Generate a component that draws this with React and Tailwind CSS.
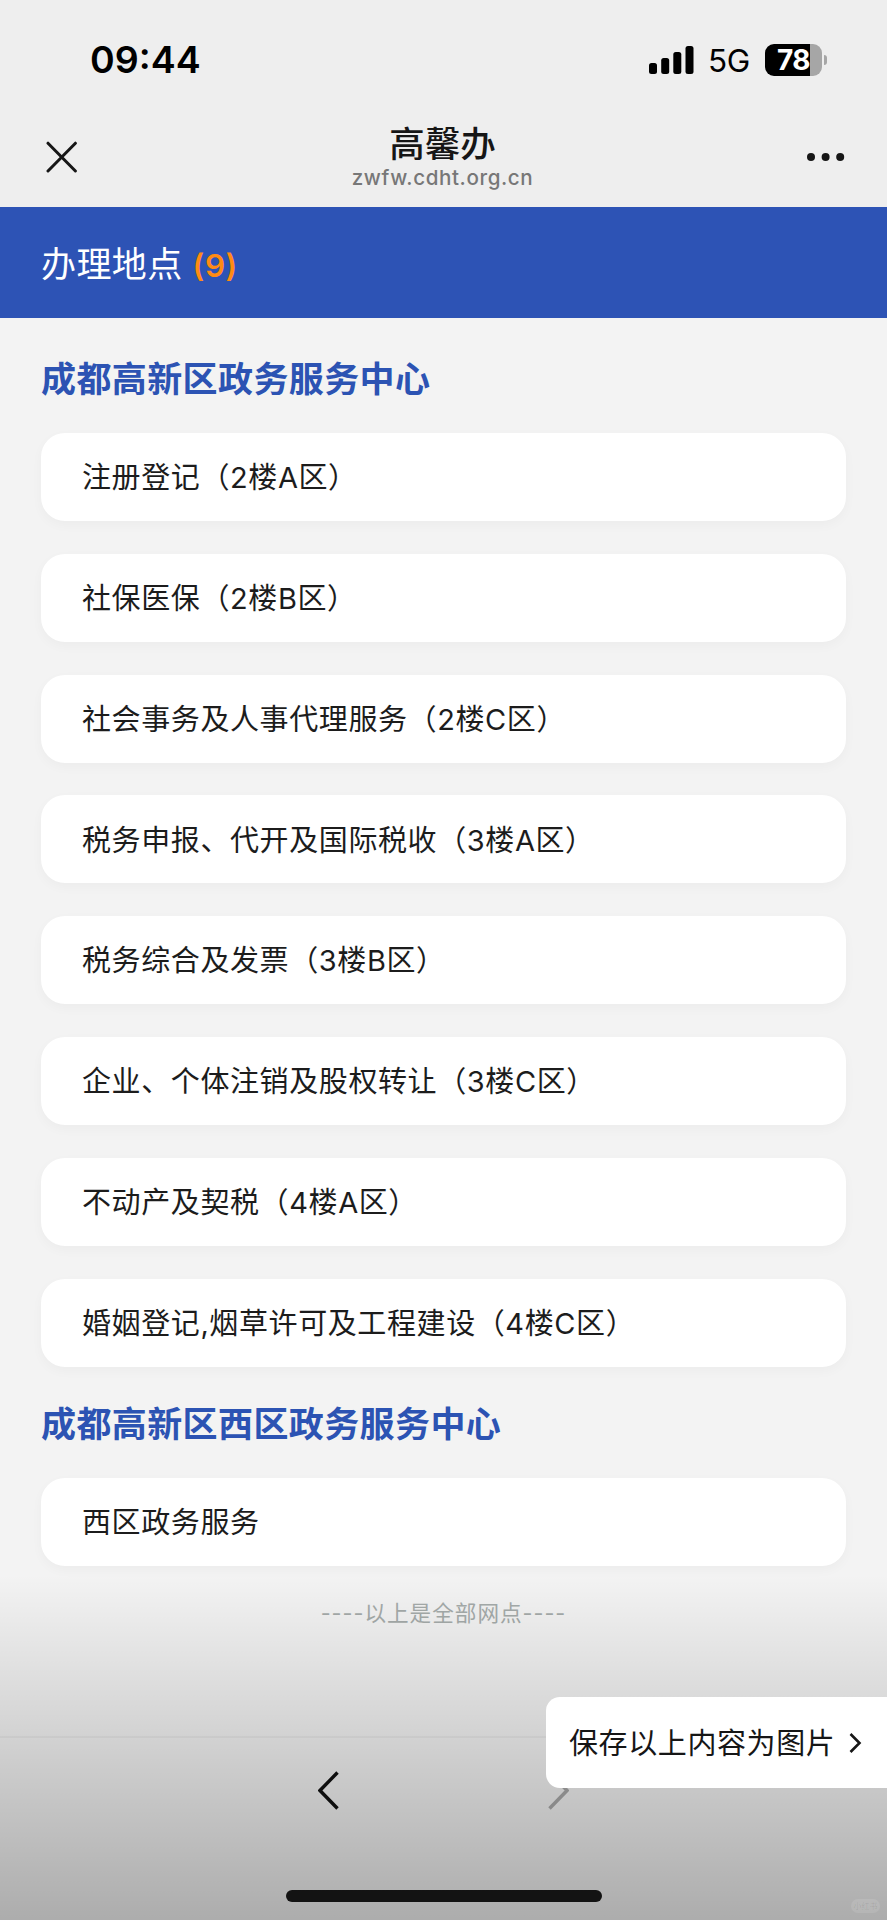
import React from 'react'

const centers = [
  {
    name: '成都高新区政务服务中心',
    places: [
      '注册登记（2楼A区）',
      '社保医保（2楼B区）',
      '社会事务及人事代理服务（2楼C区）',
      '税务申报、代开及国际税收（3楼A区）',
      '税务综合及发票（3楼B区）',
      '企业、个体注销及股权转让（3楼C区）',
      '不动产及契税（4楼A区）',
      '婚姻登记,烟草许可及工程建设（4楼C区）',
    ],
  },
  {
    name: '成都高新区西区政务服务中心',
    places: ['西区政务服务'],
  },
]

const StatusBar = () => (
  <div className="flex h-[118px] items-center justify-between pl-[90px] pr-[60px] pt-px">
    <span className="text-[37.5px] font-semibold leading-none text-black">09:44</span>
    <div className="flex items-center">
      <svg width="45" height="28" viewBox="0 0 45 28">
        <rect x="0" y="17" width="8" height="11" rx="2.5" />
        <rect x="12.2" y="12" width="8" height="16" rx="2.5" />
        <rect x="24.3" y="6" width="8" height="22" rx="2.5" />
        <rect x="36.5" y="0" width="8" height="28" rx="2.5" />
      </svg>
      <span className="ml-[14px] mt-0.5 text-[31.5px] leading-none tracking-[-0.3px] text-black">5G</span>
      <div className="ml-[15px] flex h-8 w-[57px] items-center justify-center overflow-hidden rounded-[9px] bg-[linear-gradient(90deg,#000_45px,#a6a6a6_45px)]">
        <span className="text-[28px] font-bold leading-none tracking-[-0.5px] text-white">78</span>
      </div>
      <div className="ml-0.5 h-[10px] w-[3px] rounded-r-full bg-[#a6a6a6]" />
    </div>
  </div>
)

const NavBar = () => (
  <div className="flex h-[89px] justify-between pl-[46px] pr-[42px]">
    <svg className="mt-[23px]" width="32" height="32" viewBox="0 0 32 32" fill="none" stroke="#161616" strokeWidth="3" strokeLinecap="round">
      <path d="M2 2.2 29.4 30M29.4 2.2 2 30" />
    </svg>
    <div className="flex flex-col items-center">
      <h1 className="mt-[7px] text-[35.5px] font-medium leading-10 text-[#161616]">高馨办</h1>
      <p className="mt-px text-[20.6px] font-medium leading-6 tracking-[0.6px] text-[#777]">zwfw.cdht.org.cn</p>
    </div>
    <svg className="mt-[34px]" width="38" height="10" viewBox="0 0 38 10" fill="#161616">
      <circle cx="4" cy="5" r="4" />
      <circle cx="18.6" cy="5" r="4" />
      <circle cx="33.2" cy="5" r="4" />
    </svg>
  </div>
)

const Center = ({ name, places }) => (
  <section className="group">
    <h2 className="flex h-[111px] items-center pt-1 text-[35px] font-bold tracking-[0.4px] text-[#2c53b3] group-first:h-[115px] group-first:pt-2">
      {name}
    </h2>
    <ul className="flex flex-col gap-[32.8px]">
      {places.map((place) => (
        <li
          key={place}
          className="flex h-[88px] items-center rounded-[24px] bg-white pl-[41px] pt-0.5 text-[29px] tracking-[0.6px] text-[#1c1c1c] shadow-[0_4px_12px_rgba(0,0,0,0.03)]"
        >
          {place}
        </li>
      ))}
    </ul>
  </section>
)

const App = () => {
  const total = centers.reduce((sum, c) => sum + c.places.length, 0)

  return (
    <div className="relative flex h-[1920px] w-[887px] flex-col overflow-hidden bg-[#f3f3f3] font-['Inter','Noto_Sans_CJK_SC',sans-serif]">
      <header className="bg-[#eee]">
        <StatusBar />
        <NavBar />
      </header>

      <div className="flex h-[111px] items-center bg-[#2d53b5] pl-[41px] pt-1 text-white">
        <span className="text-[35px] tracking-[0.4px]">办理地点</span>
        <span className="ml-[10px] pt-0.5 text-[31.5px] font-semibold tracking-[0.5px] text-[#ff8b13]">({total})</span>
      </div>

      <main className="h-[1418px] px-[41px]">
        {centers.map((c) => (
          <Center key={c.name} name={c.name} places={c.places} />
        ))}
        <p className="mt-[31px] text-center text-[21.6px] leading-8 tracking-[1px] text-[#a5abaa]">----以上是全部网点----</p>
      </main>

      <footer className="flex h-[184px] flex-col items-center border-t-2 border-[#eaeaea]">
        <div className="mt-[33px] flex w-[251px] justify-between">
          <svg width="21" height="39" viewBox="0 0 21 39" fill="none" stroke="#111" strokeWidth="3.4">
            <path d="M19.5 1.5 2 19.5 19.5 37.5" />
          </svg>
          <svg width="21" height="39" viewBox="0 0 21 39" fill="none" stroke="#aaa" strokeWidth="3.4">
            <path d="M1.5 1.5 19 19.5 1.5 37.5" />
          </svg>
        </div>
        <div className="mt-[80px] h-3 w-[316px] rounded-full bg-[#1a1a1a]" />
      </footer>

      {/* dim layer behind the save button */}
      <div className="pointer-events-none absolute inset-x-0 bottom-0 h-[345px] bg-gradient-to-b from-black/0 to-black/29" />

      <button className="absolute right-0 top-[1697px] flex h-[91px] w-[341px] items-center rounded-l-[14px] bg-white pl-[23px] pt-0.5 text-[29px] tracking-[0.6px] text-[#161616]">
        保存以上内容为图片
        <svg className="ml-[14px]" width="13" height="22" viewBox="0 0 13 22" fill="none" stroke="#161616" strokeWidth="2.6">
          <path d="M1.5 1 10.5 10 1.5 19" />
        </svg>
      </button>

      <span className="absolute bottom-[7px] right-[7px] flex h-[14px] w-[29px] items-center justify-center rounded-full bg-white/10 text-[8px] leading-none text-black/10">
        小红书
      </span>
    </div>
  )
}

export default App
